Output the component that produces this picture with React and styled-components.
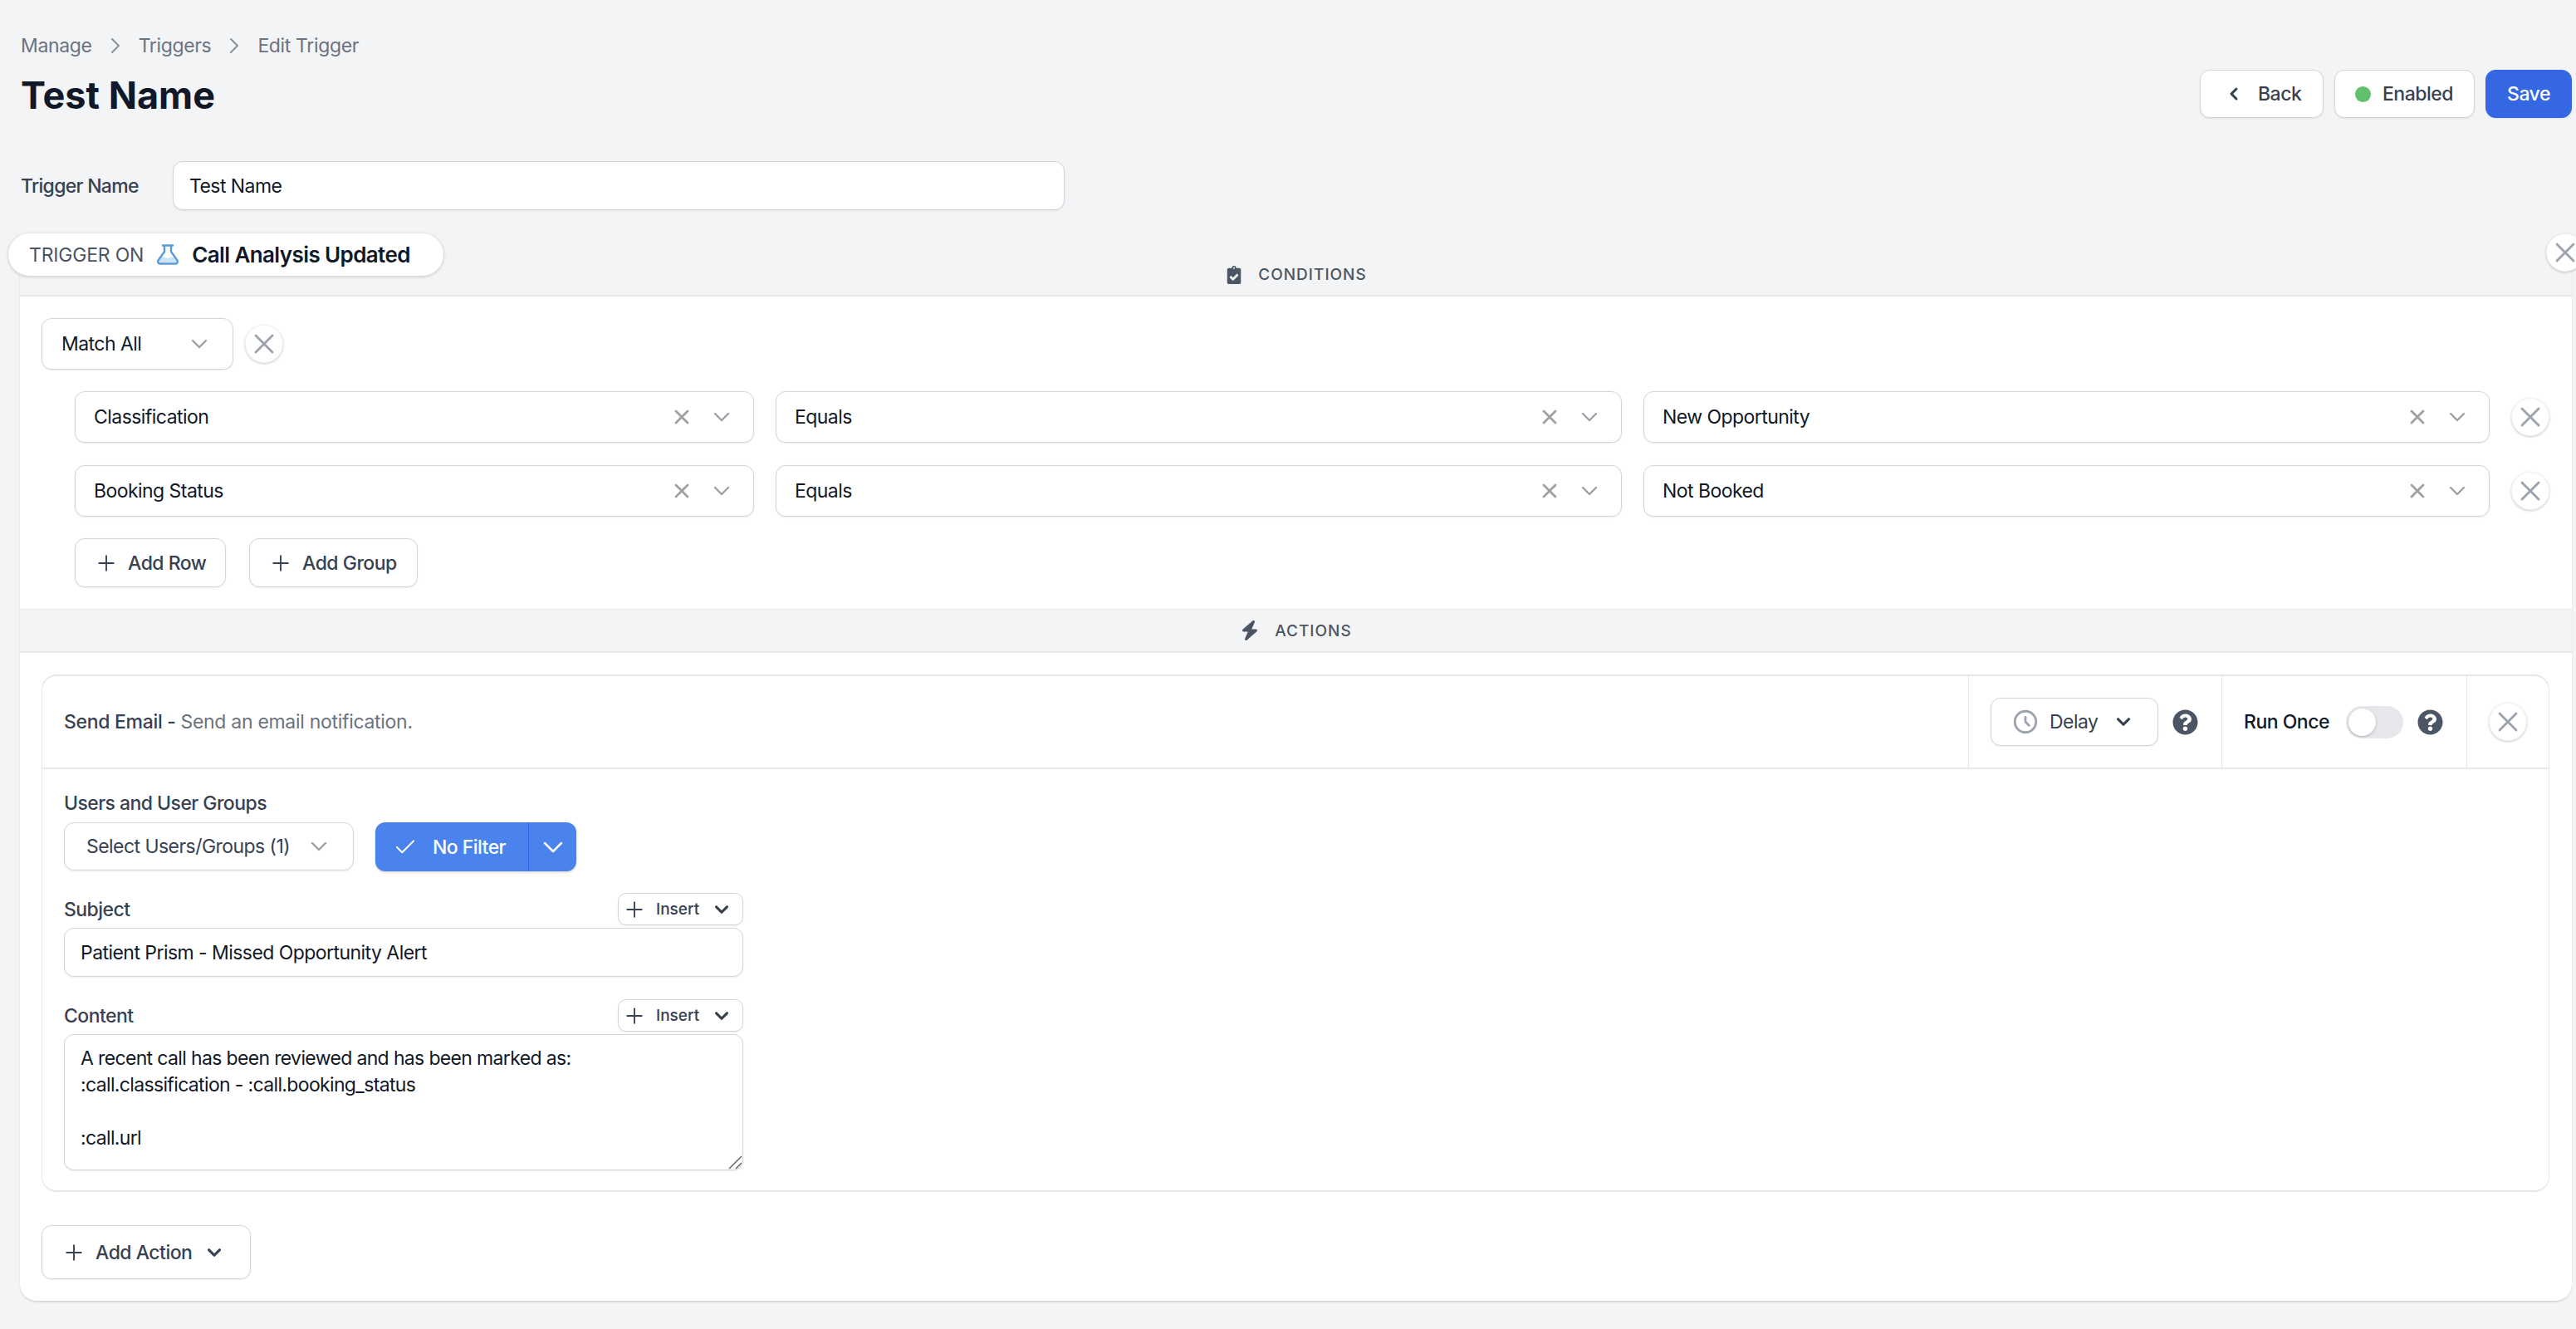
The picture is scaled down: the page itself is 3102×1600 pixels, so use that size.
import React from "react";
import styled, { createGlobalStyle } from "styled-components";
import { FaClipboardCheck, FaQuestionCircle } from "react-icons/fa";
import { FaBolt } from "react-icons/fa6";
import { HiOutlineClock, HiChevronDown, HiChevronLeft, HiX } from "react-icons/hi";
import { Check, ChevronDown, ChevronRight, Plus, X } from "lucide-react";

const GlobalStyle = createGlobalStyle`
  html, body {
    margin: 0;
    background: #f3f4f6;
    overflow: hidden;
  }
  body {
    font-family: Inter, "Liberation Sans", sans-serif;
    font-size: 23px;
    letter-spacing: -0.55px;
    color: #111827;
  }
  * { box-sizing: border-box; }
`

const Page = styled.div`
  width: 3102px;
  height: 1600px;
  padding: 42px 5px 0 25px;
  overflow: hidden;
`

const TopBar = styled.div`
  display: flex;
  justify-content: space-between;
  align-items: flex-end;
`

const Breadcrumb = styled.nav`
  display: flex;
  align-items: center;
  height: 26px;
  letter-spacing: -0.35px;
  color: #6b7280;
`

const CrumbArrow = styled(ChevronRight)`
  width: 32px;
  height: 32px;
  margin: 0 12px;
  color: #8a909b;
  stroke-width: 1.5;
`

const Title = styled.h1`
  margin: 19px 0 0 0;
  font-size: 45px;
  line-height: 56px;
  font-weight: 700;
  letter-spacing: 0;
  color: #111827;
`

const TopActions = styled.div`
  display: flex;
  gap: 13px;
  margin-bottom: 1px;
`

const Button = styled.button`
  display: flex;
  align-items: center;
  justify-content: ${(p) => (p.$left ? "flex-start" : "center")};
  height: ${(p) => p.$height || 58}px;
  width: ${(p) => p.$width}px;
  padding: 0 0 0 ${(p) => p.$left || 0}px;
  background: #fff;
  border: 1px solid #d1d5db;
  border-radius: 12px;
  box-shadow: 0 1px 2px rgba(0, 0, 0, 0.08);
  font: inherit;
  letter-spacing: -0.5px;
  font-weight: 500;
  color: #374151;
  gap: ${(p) => p.$gap || 11}px;
`

const SaveButton = styled(Button)`
  background: #3667e3;
  border-color: #3667e3;
  color: #fff;
`

const BackIcon = styled(HiChevronLeft)`
  width: 30px;
  height: 30px;
`

const StatusDot = styled.span`
  width: 19px;
  height: 19px;
  border-radius: 50%;
  background: #5fc16d;
`

const NameRow = styled.div`
  display: flex;
  align-items: center;
  margin-top: 51px;
`

const NameLabel = styled.label`
  width: 183px;
  font-weight: 500;
  letter-spacing: -0.7px;
  color: #374151;
`

const TextInput = styled.input`
  display: block;
  width: ${(p) => p.$width}px;
  height: 59px;
  padding: 0 19px;
  background: #fff;
  border: 1px solid #d1d5db;
  border-radius: 12px;
  box-shadow: 0 1px 2px rgba(0, 0, 0, 0.08);
  font: inherit;
  letter-spacing: inherit;
  color: #111827;
  outline: none;
`

const Panel = styled.section`
  position: relative;
  margin: 52px 0 0 -1px;
  background: #fff;
  border-radius: 0 0 20px 20px;
  box-shadow: 0 2px 3px -1px rgba(0, 0, 0, 0.2), 0 0 1px rgba(0, 0, 0, 0.05);
`

const TriggerPill = styled.div`
  position: absolute;
  top: -24px;
  left: -14px;
  display: flex;
  align-items: center;
  height: 51px;
  width: 524px;
  padding-left: 25px;
  background: #fff;
  border-radius: 26px;
  box-shadow: 0 1px 4px rgba(0, 0, 0, 0.2);
  z-index: 2;
`

const PillLabel = styled.span`
  color: #4b5563;
  letter-spacing: -0.2px;
`

const PillValue = styled.span`
  margin-left: 15px;
  font-size: 26px;
  font-weight: 600;
  letter-spacing: -0.6px;
  color: #111827;
`

const FlaskSvg = styled.svg`
  margin-left: 15px;
  width: 28px;
  height: 25px;
  flex: none;
`

const CircleClose = styled.button`
  display: flex;
  align-items: center;
  justify-content: center;
  flex: none;
  width: 46px;
  height: 46px;
  padding: 0;
  background: #fff;
  border: 1px solid #f3f4f6;
  border-radius: 50%;
  box-shadow: 0 1px 3px rgba(0, 0, 0, 0.22);
  color: #9ca3af;
`

const CloseIcon = styled(X)`
  width: 40px;
  height: 40px;
  flex: none;
  stroke-width: 1.7;
`

const PanelClose = styled(CircleClose)`
  position: absolute;
  top: -24px;
  right: -15px;
  z-index: 2;
`

const SectionHeader = styled.div`
  display: flex;
  align-items: center;
  justify-content: center;
  gap: 18px;
  height: ${(p) => p.$height}px;
  background: #f3f4f6;
  border-top: 1px solid ${(p) => p.$topLine};
  border-bottom: 2px solid #e5e7eb;
  color: #4b5563;
  font-size: 19px;
  font-weight: 500;
  letter-spacing: 1px;
  svg {
    height: ${(p) => p.$iconHeight}px;
    width: auto;
  }
`

const ConditionsBody = styled.div`
  display: flex;
  flex-direction: column;
  gap: 26px;
  padding: 26px 27px 26px 26px;
`

const GroupRow = styled.div`
  display: flex;
  align-items: center;
  gap: 14px;
`

const RowList = styled.div`
  display: flex;
  flex-direction: column;
  gap: 27px;
  padding-left: 40px;
`

const ConditionRow = styled.div`
  display: grid;
  grid-template-columns: 818px 1019px 1019px 46px;
  gap: 26px;
  align-items: center;
`

const Select = styled.div`
  display: flex;
  align-items: center;
  height: ${(p) => p.$height || 62}px;
  width: ${(p) => (p.$width ? p.$width + "px" : "auto")};
  padding: 0 ${(p) => p.$right || 22}px 0 ${(p) => p.$left || 22}px;
  background: #fff;
  border: 1px solid #d1d5db;
  border-radius: 12px;
  box-shadow: 0 1px 2px rgba(0, 0, 0, 0.08);
  color: ${(p) => p.$color || "#111827"};
`

const SelectText = styled.span`
  flex: 1;
`

const DelayText = styled(SelectText)`
  padding-left: 12px;
`

const ClearIcon = styled(HiX)`
  width: 28px;
  height: 28px;
  margin-right: 18px;
  color: #a0a0a0;
`

// thin grey arrow of the plain selects
const SelectArrow = styled(ChevronDown)`
  width: 32px;
  height: 32px;
  flex: none;
  color: #9a9ea6;
  stroke-width: 1.75;
`

// heavier arrow of the action buttons
const ButtonArrow = styled(HiChevronDown)`
  width: 32px;
  height: 32px;
  flex: none;
  color: #374151;
`

const ClockIcon = styled(HiOutlineClock)`
  width: 34px;
  height: 34px;
  flex: none;
  color: #9ca3af;
`

const ButtonRow = styled.div`
  display: flex;
  gap: 28px;
  padding-left: 40px;
`

const PlusIcon = styled(Plus)`
  width: 30px;
  height: 30px;
  flex: none;
  color: #374151;
  stroke-width: 1.5;
`

const ActionsBody = styled.div`
  padding: 26px 27px 26px 26px;
`

const Card = styled.div`
  border: solid #e5e7eb;
  border-width: 2px 1px;
  border-radius: 18px;
`

const CardHeader = styled.div`
  display: flex;
  align-items: stretch;
  height: 112px;
  border-bottom: 2px solid #e5e7eb;
`

const CardTitle = styled.div`
  flex: 1;
  align-self: center;
  padding-left: 26px;
  font-weight: 500;
  letter-spacing: -0.3px;
  color: #374151;
  span {
    font-weight: 400;
    color: #6b7280;
  }
`

const HeaderCell = styled.div`
  display: flex;
  align-items: center;
  width: ${(p) => p.$width}px;
  padding-left: ${(p) => p.$left}px;
  border-left: 1px solid #e5e7eb;
`

const HelpIcon = styled(FaQuestionCircle)`
  width: 31px;
  height: 31px;
  flex: none;
  margin-left: ${(p) => p.$gap || 0}px;
  color: #4b5563;
`

const RunLabel = styled.span`
  font-weight: 500;
  letter-spacing: -0.5px;
  color: #111827;
`

const Toggle = styled.span`
  display: flex;
  align-items: center;
  width: 69px;
  height: 39px;
  margin: 0 17px 0 20px;
  padding: 3px;
  border-radius: 20px;
  background: #e5e7eb;
  &::before {
    content: "";
    width: 33px;
    height: 33px;
    border-radius: 50%;
    background: #fff;
    box-shadow: 0 1px 3px rgba(0, 0, 0, 0.25);
  }
`

const CardBody = styled.div`
  padding: 28px 26px 24px 26px;
`

const FieldLabel = styled.label`
  display: block;
  line-height: 26px;
  font-weight: 500;
  color: #374151;
`

const FilterRow = styled.div`
  display: flex;
  gap: 26px;
  margin: 10px 0 26px;
`

const SplitButton = styled.div`
  display: flex;
  height: 59px;
  color: #fff;
  background: #4b83ec;
  border-radius: 12px;
  box-shadow: 0 1px 3px rgba(0, 0, 0, 0.2);
`

const SplitMain = styled.div`
  display: flex;
  align-items: center;
  gap: 18px;
  width: 185px;
  padding-left: 21px;
  font-weight: 500;
  border-right: 1px solid #3667e3;
`

const CheckIcon = styled(Check)`
  width: 30px;
  height: 30px;
  stroke-width: 1.6;
`

const SplitArrow = styled.div`
  display: flex;
  align-items: center;
  justify-content: center;
  flex: 1;
  width: 57px;
`

const SplitChevron = styled(ChevronDown)`
  width: 40px;
  height: 40px;
  stroke-width: 1.5;
`

const FieldHead = styled.div`
  display: flex;
  align-items: center;
  justify-content: space-between;
  width: 818px;
  height: 39px;
  margin-bottom: 3px;
  ${FieldLabel} {
    padding-top: 1px;
  }
`

const InsertButton = styled(Button)`
  font-size: 19px;
  letter-spacing: 0;
  border-radius: 10px;
`

const AreaWrap = styled.div`
  position: relative;
  width: 818px;
  height: 164px;
`

const ContentArea = styled.textarea`
  display: block;
  width: 100%;
  height: 100%;
  padding: 12px 19px;
  background: #fff;
  border: 1px solid #d1d5db;
  border-radius: 12px;
  box-shadow: 0 1px 2px rgba(0, 0, 0, 0.08);
  font: inherit;
  letter-spacing: -0.65px;
  line-height: 32px;
  color: #111827;
  outline: none;
  resize: none;
`

const ResizeGrip = styled.svg`
  position: absolute;
  right: 1px;
  bottom: 1px;
  width: 17px;
  height: 17px;
`

const FieldBlock = styled.div`
  margin-bottom: 27px;
`

const AddActionButton = styled(Button)`
  margin-top: 40px;
`

const contentText = `A recent call has been reviewed and has been marked as:
:call.classification - :call.booking_status

:call.url`

const conditions = [
  { field: "Classification", value: "New Opportunity" },
  { field: "Booking Status", value: "Not Booked" },
]

function Flask() {
  return (
    <FlaskSvg viewBox="0 0 28 25" fill="none">
      <path d="M6 16c4-2 6 1.5 9 .5s4-1 7-.5l3 6H3z" fill="#cfe2f3" />
      <path
        d="M8 1.5h12M10 1.5v7.5L2.5 19.5a2.6 2.6 0 0 0 2.1 4h18.8a2.6 2.6 0 0 0 2.1-4L18 9V1.5"
        stroke="#5b9bd5"
        strokeWidth="2.4"
        strokeLinecap="round"
        strokeLinejoin="round"
      />
    </FlaskSvg>
  )
}

function ConditionSelect({ text }) {
  return (
    <Select>
      <SelectText>{text}</SelectText>
      <ClearIcon />
      <SelectArrow />
    </Select>
  )
}

function InsertHead({ label }) {
  return (
    <FieldHead>
      <FieldLabel>{label}</FieldLabel>
      <InsertButton $width={151} $height={39} $left={4}>
        <PlusIcon />
        Insert
        <ButtonArrow />
      </InsertButton>
    </FieldHead>
  )
}

export default function App() {
  return (
    <Page>
      <GlobalStyle />
      <TopBar>
        <div>
          <Breadcrumb>
            Manage <CrumbArrow /> Triggers <CrumbArrow /> Edit Trigger
          </Breadcrumb>
          <Title>Test Name</Title>
        </div>
        <TopActions>
          <Button $width={149} $left={25} $gap={14}>
            <BackIcon />
            Back
          </Button>
          <Button $width={169} $left={24} $gap={14}>
            <StatusDot />
            Enabled
          </Button>
          <SaveButton $width={104}>Save</SaveButton>
        </TopActions>
      </TopBar>

      <NameRow>
        <NameLabel>Trigger Name</NameLabel>
        <TextInput $width={1074} defaultValue="Test Name" readOnly />
      </NameRow>

      <Panel>
        <TriggerPill>
          <PillLabel>TRIGGER ON</PillLabel>
          <Flask />
          <PillValue>Call Analysis Updated</PillValue>
        </TriggerPill>
        <PanelClose><CloseIcon /></PanelClose>

        <SectionHeader $height={52} $topLine="#f1f2f4" $iconHeight={22}>
          <FaClipboardCheck />
          CONDITIONS
        </SectionHeader>
        <ConditionsBody>
          <GroupRow>
            <Select $width={231} $left={23} $right={24}>
              <SelectText>Match All</SelectText>
              <SelectArrow />
            </Select>
            <CircleClose><CloseIcon /></CircleClose>
          </GroupRow>
          <RowList>
            {conditions.map((c) => (
              <ConditionRow key={c.field}>
                <ConditionSelect text={c.field} />
                <ConditionSelect text="Equals" />
                <ConditionSelect text={c.value} />
                <CircleClose><CloseIcon /></CircleClose>
              </ConditionRow>
            ))}
          </RowList>
          <ButtonRow>
            <Button $width={182} $height={59} $left={22}><PlusIcon />Add Row</Button>
            <Button $width={203} $height={59} $left={22}><PlusIcon />Add Group</Button>
          </ButtonRow>
        </ConditionsBody>

        <SectionHeader $height={53} $topLine="#e5e7eb" $iconHeight={24}>
          <FaBolt />
          ACTIONS
        </SectionHeader>
        <ActionsBody>
          <Card>
            <CardHeader>
              <CardTitle>Send Email - <span>Send an email notification.</span></CardTitle>
              <HeaderCell $width={305} $left={26}>
                <Select $width={202} $height={58} $left={24} $right={25} $color="#374151">
                  <ClockIcon />
                  <DelayText>Delay</DelayText>
                  <ButtonArrow />
                </Select>
                <HelpIcon $gap={17} />
              </HeaderCell>
              <HeaderCell $width={295} $left={26}>
                <RunLabel>Run Once</RunLabel>
                <Toggle />
                <HelpIcon />
              </HeaderCell>
              <HeaderCell $width={99} $left={26}>
                <CircleClose><CloseIcon /></CircleClose>
              </HeaderCell>
            </CardHeader>
            <CardBody>
              <FieldLabel>Users and User Groups</FieldLabel>
              <FilterRow>
                <Select $width={349} $height={58} $left={26} $right={25} $color="#374151">
                  <SelectText>Select Users/Groups (1)</SelectText>
                  <SelectArrow />
                </Select>
                <SplitButton>
                  <SplitMain><CheckIcon />No Filter</SplitMain>
                  <SplitArrow><SplitChevron /></SplitArrow>
                </SplitButton>
              </FilterRow>
              <FieldBlock>
                <InsertHead label="Subject" />
                <TextInput $width={818} defaultValue="Patient Prism - Missed Opportunity Alert" readOnly />
              </FieldBlock>
              <InsertHead label="Content" />
              <AreaWrap>
                <ContentArea defaultValue={contentText} readOnly />
                <ResizeGrip viewBox="0 0 17 17" fill="none" stroke="#666" strokeWidth="1.5">
                  <path d="M1 16 16 1M9 16l7-7" />
                </ResizeGrip>
              </AreaWrap>
            </CardBody>
          </Card>
          <AddActionButton $width={252} $height={65} $left={23}>
            <PlusIcon />
            Add Action
            <ButtonArrow />
          </AddActionButton>
        </ActionsBody>
      </Panel>
    </Page>
  )
}
